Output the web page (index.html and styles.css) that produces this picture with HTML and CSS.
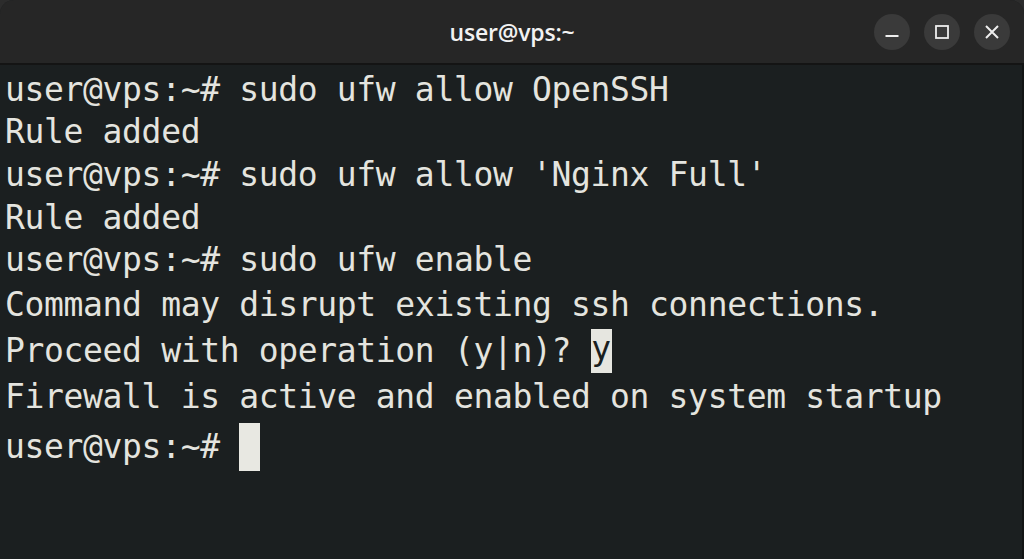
FILE: index.html
```html
<!DOCTYPE html>
<html lang="en">
<head>
<meta charset="utf-8">
<title>user@vps:~</title>
<link rel="stylesheet" href="styles.css">
</head>
<body>
<div class="window">
  <header class="titlebar">
    <div class="title">user@vps:~</div>
    <div class="controls">
      <button class="ctl" aria-label="Minimize">
        <svg width="16" height="16" viewBox="0 0 16 16"><path d="M1.5 12h13" stroke="#eeeeee" stroke-width="2" fill="none"/></svg>
      </button>
      <button class="ctl" aria-label="Maximize">
        <svg width="16" height="16" viewBox="0 0 16 16"><rect x="2" y="2" width="12" height="12" stroke="#eeeeee" stroke-width="1.8" fill="none"/></svg>
      </button>
      <button class="ctl" aria-label="Close">
        <svg width="16" height="16" viewBox="0 0 16 16"><path d="M2 2L14 14M14 2L2 14" stroke="#eeeeee" stroke-width="2" fill="none"/></svg>
      </button>
    </div>
  </header>
  <main class="term">
    <div class="line l-a">user@vps:~# sudo ufw allow OpenSSH</div>
    <div class="line l-a">Rule added</div>
    <div class="line l-a">user@vps:~# sudo ufw allow 'Nginx Full'</div>
    <div class="line l-a">Rule added</div>
    <div class="line l-a">user@vps:~# sudo ufw enable</div>
    <div class="line l-b">Command may disrupt existing ssh connections.</div>
    <div class="line l-b">Proceed with operation (y|n)? <span class="sel">y</span></div>
    <div class="line l-b">Firewall is active and enabled on system startup</div>
    <div class="line l-c">user@vps:~# <span class="cursor"></span></div>
  </main>
</div>
</body>
</html>
```
FILE: styles.css
```css
html, body {
  margin: 0;
  padding: 0;
  background: #2c2c2c;
}
.window {
  width: 1024px;
  height: 559px;
  display: flex;
  flex-direction: column;
  border-radius: 14px 14px 0 0;
  overflow: hidden;
  background: #1b1f20;
}
.titlebar {
  height: 63px;
  flex: 0 0 63px;
  background: #262626;
  border-bottom: 2px solid #141414;
  position: relative;
  display: flex;
  align-items: center;
  justify-content: flex-end;
}
.title {
  position: absolute;
  left: 0;
  right: 0;
  top: 0;
  bottom: 0;
  display: flex;
  align-items: center;
  justify-content: center;
  font-family: "Open Sans", sans-serif;
  font-weight: 600;
  font-size: 23px;
  color: #f2f2f2;
  letter-spacing: -0.2px;
  padding-top: 1px;
}
.controls {
  position: relative;
  display: flex;
  gap: 14px;
  margin-right: 14px;
  margin-top: 1px;
}
.ctl {
  width: 36px;
  height: 36px;
  border-radius: 50%;
  border: none;
  padding: 0;
  background: #3a3a3a;
  display: flex;
  align-items: center;
  justify-content: center;
}
.ctl svg {
  display: block;
}
.term {
  flex: 1;
  background: #1b1f20;
  border-right: 2px solid #121414;
  padding: 3px 0 0 5px;
  font-family: "DejaVu Sans Mono", monospace;
  font-size: 33px;
  letter-spacing: -0.35px;
  color: #e4e4df;
}
.line {
  display: flex;
  align-items: center;
  white-space: pre;
}
.l-a {
  height: 42.6px;
}
.l-b {
  height: 46px;
}
.l-b:first-of-type,
.l-a + .l-b {
  margin-top: 1px;
}
.l-c {
  height: 52px;
  margin-top: 1px;
}
.sel {
  background: #e6e6e0;
  color: #1b1f20;
  display: inline-block;
  height: 44px;
  line-height: 40px;
  width: 21px;
  text-align: center;
}
.cursor {
  display: inline-block;
  width: 21px;
  height: 48px;
  background: #e8e8e2;
}
```
